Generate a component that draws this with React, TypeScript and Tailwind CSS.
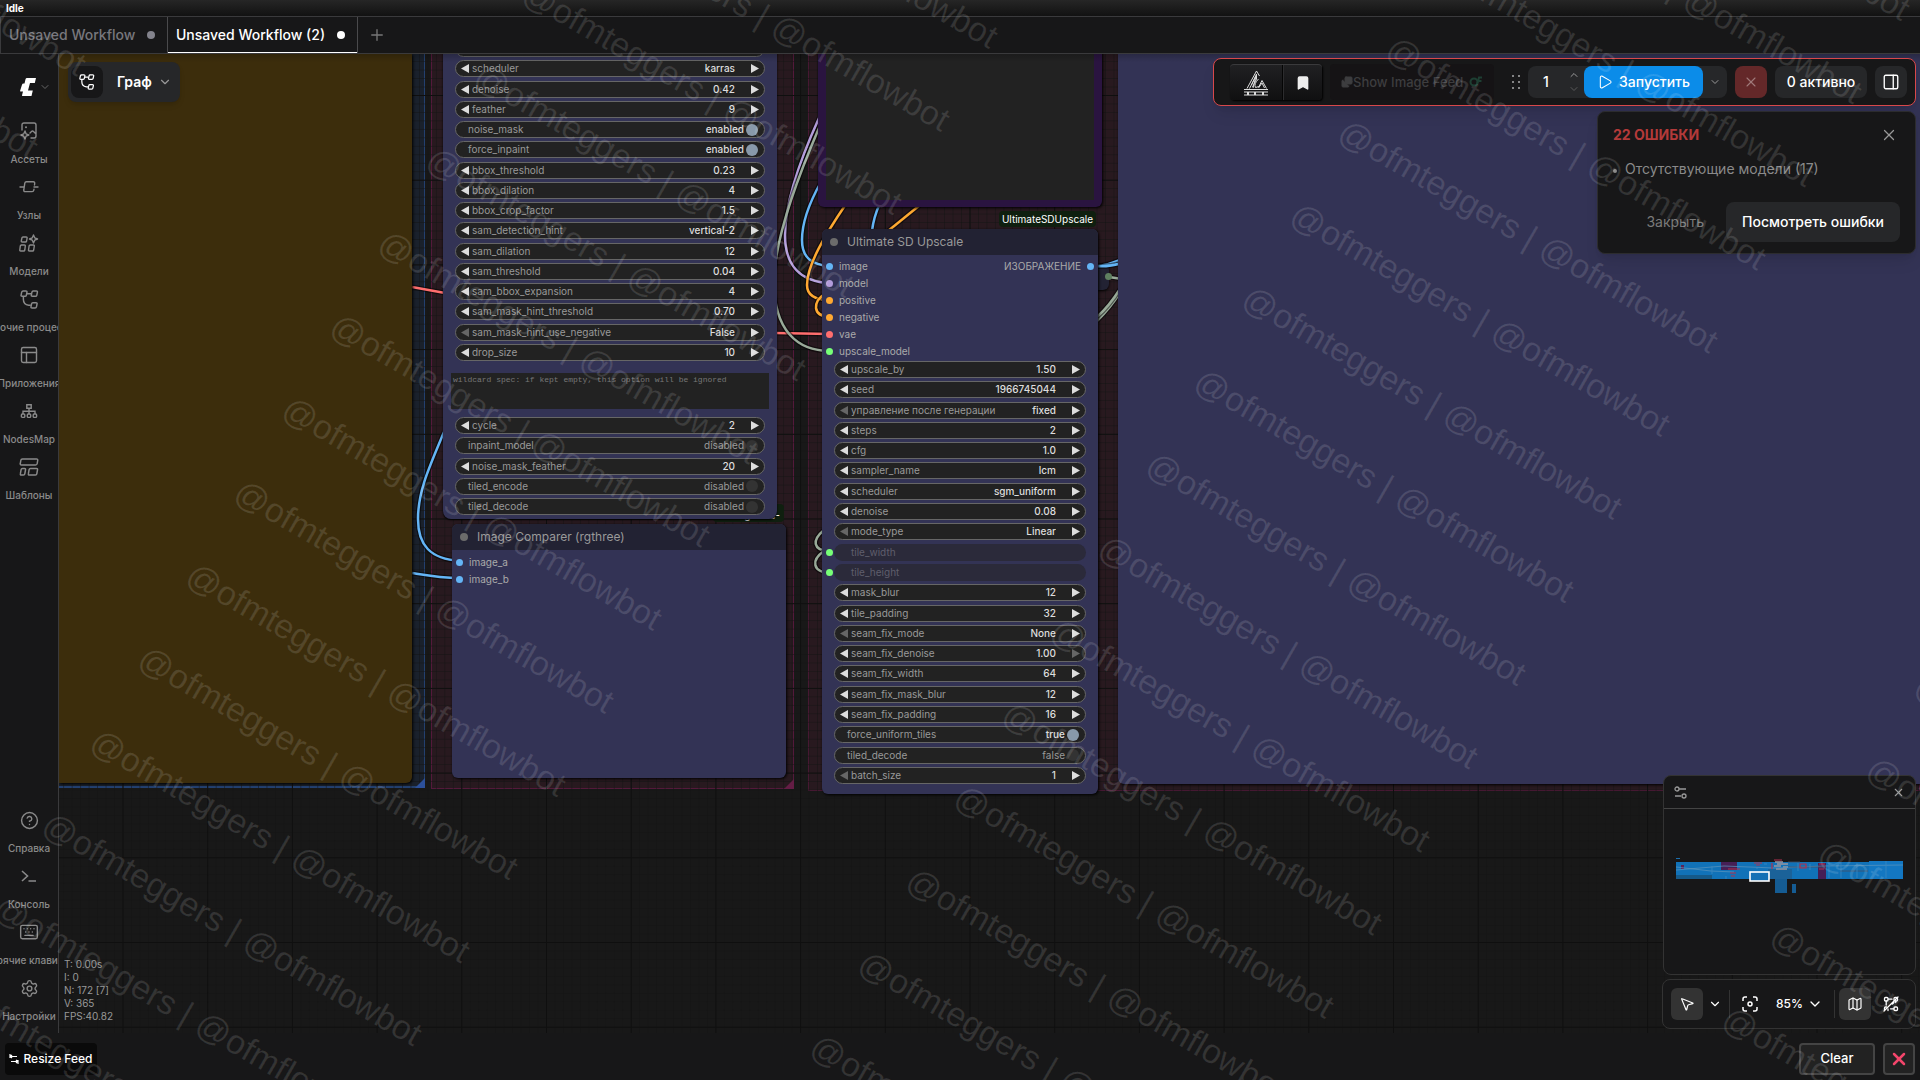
import React from "react";
import clsx from "clsx";
import {
  Bookmark,
  ChevronDown,
  ChevronUp,
  CircleHelp,
  Images,
  Keyboard,
  Map as MapIcon,
  MousePointer2,
  PanelRight,
  PanelsTopLeft,
  Play,
  Plus,
  Settings,
  X,
} from "lucide-react";

type Widget = {
  name: string;
  value?: string;
  kind?: "number" | "combo" | "toggle" | "linked";
  on?: boolean;
  minReached?: boolean;
  maxReached?: boolean;
};

const detailerWidgets: Widget[] = [
  { name: "sampler_name", value: "euler", kind: "combo" },
  { name: "scheduler", value: "karras", kind: "combo" },
  { name: "denoise", value: "0.42" },
  { name: "feather", value: "9" },
  { name: "noise_mask", value: "enabled", kind: "toggle", on: true },
  { name: "force_inpaint", value: "enabled", kind: "toggle", on: true },
  { name: "bbox_threshold", value: "0.23" },
  { name: "bbox_dilation", value: "4" },
  { name: "bbox_crop_factor", value: "1.5" },
  { name: "sam_detection_hint", value: "vertical-2", kind: "combo" },
  { name: "sam_dilation", value: "12" },
  { name: "sam_threshold", value: "0.04" },
  { name: "sam_bbox_expansion", value: "4" },
  { name: "sam_mask_hint_threshold", value: "0.70" },
  { name: "sam_mask_hint_use_negative", value: "False", kind: "combo", minReached: true },
  { name: "drop_size", value: "10" },
];

const detailerTail: Widget[] = [
  { name: "cycle", value: "2" },
  { name: "inpaint_model", value: "disabled", kind: "toggle" },
  { name: "noise_mask_feather", value: "20" },
  { name: "tiled_encode", value: "disabled", kind: "toggle" },
  { name: "tiled_decode", value: "disabled", kind: "toggle" },
];

const upscaleWidgets: Widget[] = [
  { name: "upscale_by", value: "1.50" },
  { name: "seed", value: "1966745044" },
  { name: "управление после генерации", value: "fixed", kind: "combo", minReached: true },
  { name: "steps", value: "2" },
  { name: "cfg", value: "1.0" },
  { name: "sampler_name", value: "lcm", kind: "combo" },
  { name: "scheduler", value: "sgm_uniform", kind: "combo" },
  { name: "denoise", value: "0.08" },
  { name: "mode_type", value: "Linear", kind: "combo", minReached: true },
  { name: "tile_width", kind: "linked" },
  { name: "tile_height", kind: "linked" },
  { name: "mask_blur", value: "12" },
  { name: "tile_padding", value: "32" },
  { name: "seam_fix_mode", value: "None", kind: "combo", minReached: true },
  { name: "seam_fix_denoise", value: "1.00", maxReached: true },
  { name: "seam_fix_width", value: "64" },
  { name: "seam_fix_mask_blur", value: "12" },
  { name: "seam_fix_padding", value: "16" },
  { name: "force_uniform_tiles", value: "true", kind: "toggle", on: true },
  { name: "tiled_decode", value: "false", kind: "toggle" },
  { name: "batch_size", value: "1", minReached: true },
];

const upscaleSlots = [
  { name: "image", color: "bg-[#64b5f6]" },
  { name: "model", color: "bg-[#b39ddb]" },
  { name: "positive", color: "bg-[#ffa931]" },
  { name: "negative", color: "bg-[#ffa931]" },
  { name: "vae", color: "bg-[#ff6e6e]" },
  { name: "upscale_model", color: "bg-[#77ff77]" },
];

function Arrow({ dir, dim }: { dir: "left" | "right"; dim?: boolean }) {
  return (
    <svg viewBox="0 0 8 9" className={clsx("w-2 h-[9px]", dim ? "fill-[#666]" : "fill-[#ddd]")}>
      {dir === "left" ? <path d="M8 0v9L0 4.5z" /> : <path d="M0 0v9l8-4.5z" />}
    </svg>
  );
}

function WidgetRow({ node, w }: { node: string; w: Widget }) {
  const id = `${node}-${w.name}`;

  if (w.kind === "linked") {
    return (
      <div className="relative h-[17px] flex items-center rounded-full bg-[#2b2a3a] pl-[17px] text-[#5f5e6c]">
        <span className="absolute -left-2 top-[5px] size-[7px] rounded-full bg-[#77ff77]" />
        {w.name}
      </div>
    );
  }

  if (w.kind === "toggle") {
    return (
      <div className="h-[17px] flex items-center rounded-full border border-[#666] bg-[#222] pl-3 pr-1.5">
        <label htmlFor={id} className="flex-1 text-[#999]">
          {w.name}
        </label>
        <span className={w.on ? "text-[#ddd] font-medium" : "text-[#999]"}>{w.value}</span>
        <input
          id={id}
          type="checkbox"
          defaultChecked={w.on}
          className="appearance-none ml-0.5 size-3 rounded-full bg-[#333] checked:bg-[#8899aa]"
        />
      </div>
    );
  }

  return (
    <div className="h-[17px] flex items-center rounded-full border border-[#666] bg-[#222] px-[5px]">
      <button aria-label="previous">
        <Arrow dir="left" dim={w.minReached} />
      </button>
      <label htmlFor={id} className="ml-[3px] text-[#999] whitespace-nowrap">
        {w.name}
      </label>
      {w.kind === "combo" ? (
        <select
          id={id}
          className="appearance-none flex-1 min-w-0 mr-4 bg-transparent text-[#ddd] font-medium text-right [text-align-last:right]"
        >
          <option>{w.value}</option>
        </select>
      ) : (
        <input
          id={id}
          defaultValue={w.value}
          className="flex-1 min-w-0 mr-4 bg-transparent text-[#ddd] font-medium text-right"
        />
      )}
      <button aria-label="next">
        <Arrow dir="right" dim={w.maxReached} />
      </button>
    </div>
  );
}

function NodeHeader({ title }: { title: string }) {
  return (
    <div className="h-[26px] flex items-center gap-[9px] pl-2 bg-[#222233] rounded-t-md">
      <span className="size-2 rounded-full bg-[#6b6b6b]" />
      <span className="text-xs text-[#999]">{title}</span>
    </div>
  );
}

function Slot({ name, color }: { name: string; color: string }) {
  return (
    <div className="h-[17px] flex items-center gap-1.5 pl-1">
      <span className={clsx("size-[7px] rounded-full", color)} />
      <span className="text-[#aaa]">{name}</span>
    </div>
  );
}

function Grid() {
  return (
    <svg className="absolute inset-0 w-full h-full">
      <defs>
        <pattern id="minor" width="8.47" height="8.47" x="63.5" y="41" patternUnits="userSpaceOnUse">
          <path d="M0 0H8.47M0 0V8.47" stroke="#131313" strokeWidth="1" fill="none" />
        </pattern>
        <pattern id="major" width="84.7" height="84.7" x="63.5" y="41" patternUnits="userSpaceOnUse">
          <path d="M0 0H85M0 0V85" stroke="#0f0f0f" strokeWidth="2" fill="none" />
        </pattern>
      </defs>
      <rect width="100%" height="100%" fill="url(#minor)" />
      <rect width="100%" height="100%" fill="url(#major)" />
    </svg>
  );
}

const wires = [
  { d: "M412 287L445 293", c: "#ff6e6e" },
  { d: "M775 333L830 334", c: "#ff6e6e" },
  { d: "M444 432C428 470 418 492 418 519C418 545 430 559 460 561", c: "#64b5f6" },
  { d: "M412 573C430 576 440 578 460 578", c: "#64b5f6" },
  { d: "M819 118C800 160 785 205 785 235C785 265 800 282 830 283", c: "#b39ddb" },
  { d: "M819 128C800 172 774 240 774 282C774 330 797 351 830 351", c: "#99aa99" },
  { d: "M821 182C808 205 802 225 802 240C802 258 812 265 830 266", c: "#64b5f6" },
  { d: "M846 204C825 235 807 265 807 285C807 297 817 300 830 300", c: "#ffa931" },
  { d: "M920 205L888 231", c: "#ffa931" },
  { d: "M826 293C812 302 812 316 830 317", c: "#ffa931" },
  { d: "M880 203C876 212 873 222 872 231", c: "#64b5f6" },
  { d: "M1095 266C1105 266 1112 263 1122 259", c: "#64b5f6" },
  { d: "M1095 266C1105 267 1112 266 1122 263", c: "#64b5f6" },
  { d: "M1109 277L1122 279", c: "#99aa99" },
  { d: "M1097 321C1106 312 1114 302 1119 294", c: "#99aa99" },
  { d: "M1097 317C1106 309 1113 300 1120 289", c: "#99aa99" },
  { d: "M824 530C812 540 812 550 830 552", c: "#99aa99" },
  { d: "M824 551C811 560 812 572 830 573", c: "#99aa99" },
];

function Wires() {
  return (
    <svg className="absolute inset-0 w-full h-full" fill="none">
      <g transform="translate(-59 -54)">
        {wires.map((w) => (
          <g key={w.d}>
            <path d={w.d} stroke="#000" strokeOpacity="0.5" strokeWidth="5" />
            <path d={w.d} stroke={w.c} strokeWidth="2.5" />
          </g>
        ))}
      </g>
    </svg>
  );
}

function WorkflowIcon({ className }: { className?: string }) {
  return (
    <svg viewBox="0 0 18 18" className={className} fill="none" stroke="currentColor" strokeWidth="1.4" strokeLinejoin="round">
      <path d="M3 1h2.600q1.200 0 1 1l-.6 3q-.2 1-1.200 1H2q-1.200 0-1-1l.6-3q.3-1 1.400-1zM12.500 1h3q1.200 0 1 1l-.6 3q-.2 1-1.300 1h-2.900q-1.200 0-1-1l.6-3q.2-1 1.200-1zM12.200 12h3q1.200 0 1 1l-.6 3q-.2 1-1.300 1h-2.900q-1.200 0-1-1l.6-3q.2-1 1.200-1z" />
      <path d="M6.500 3.500h4M3.200 6.200v2.600q0 5.200 5 5.600h2" />
    </svg>
  );
}

function NodeIcon() {
  return (
    <svg viewBox="0 0 20 14" className="w-5 h-3.5" fill="none" stroke="currentColor" strokeWidth="1.4" strokeLinecap="round">
      <path d="M1 7h4M15 7h4M15.500 5l.2-1.600q.2-1.600-1.400-1.600H7.400q-1.300 0-1.600 1.400l-1 6.800q-.3 1.600 1.400 1.600h7q1.300 0 1.600-1.400l.2-1" />
    </svg>
  );
}

function ModelsIcon() {
  return (
    <svg viewBox="0 0 20 18" className="w-5 h-[18px]" fill="none" stroke="currentColor" strokeWidth="1.4" strokeLinejoin="round">
      <path d="M4 3h3.200q1 0 .9 1l-.5 3q-.2 1-1.100 1H3.200q-1 0-.9-1l.6-3Q3.100 3 4 3zM2.400 11h3q1 0 .9 1l-.5 4q-.2 1-1.100 1h-3q-1 0-.9-1l.5-4q.2-1 1.100-1zM11.200 11h3.200q1 0 .9 1l-.6 4q-.2 1-1.100 1h-3.200q-1 0-.9-1l.6-4q.2-1 1.100-1zM14.500 1l1.200 2.800L18.500 5l-2.800 1.200L14.500 9l-1.200-2.800L10.500 5l2.800-1.200z" />
    </svg>
  );
}

function AssetsIcon() {
  return (
    <svg viewBox="0 0 18 18" className="size-[18px]" fill="none" stroke="currentColor" strokeWidth="1.4" strokeLinejoin="round" strokeLinecap="round">
      <path d="M2 8V3q0-2 2-2h10q2 0 2 2v11q0 2-2 2h-3M16 12l-2.500-2.500q-1-1-2 0L10 11" />
      <path d="M5 9l1 2.800L8.800 13 6 14.200 5 17l-1.200-2.800L1 13l2.800-1.200z" />
      <circle cx="6" cy="5.200" r="1" fill="currentColor" stroke="none" />
    </svg>
  );
}

function SitemapIcon() {
  return (
    <svg viewBox="0 0 18 16" className="w-[18px] h-4" fill="none" stroke="currentColor" strokeWidth="1.400">
      <path d="M6.800 1.700h4.400v3.600H6.800zM9 5.300v6M3 11V8.200h12V11" />
      <rect x="1.400" y="11" width="3.400" height="3.400" rx="1" />
      <rect x="7.300" y="11" width="3.400" height="3.400" rx="1" />
      <rect x="13.200" y="11" width="3.400" height="3.400" rx="1" />
    </svg>
  );
}

function TemplatesIcon() {
  return (
    <svg viewBox="0 0 20 18" className="w-5 h-[18px]" fill="none" stroke="currentColor" strokeWidth="1.500" strokeLinejoin="round">
      <path d="M3.500 1h14q1.500 0 1.200 1.500l-.5 3q-.2 1.500-1.700 1.500h-14Q1 7 1.300 5.500l.5-3Q2 1 3.500 1zM3.500 10.500h2q1.300 0 1 1.300l-.7 4q-.2 1.200-1.400 1.200h-2q-1.300 0-1-1.300l.7-4q.2-1.200 1.400-1.200zM11.500 10.500h6q1.300 0 1 1.300l-.7 4q-.2 1.200-1.400 1.200h-6q-1.300 0-1-1.300l.7-4q.2-1.200 1.400-1.200z" />
    </svg>
  );
}

function ConsoleIcon() {
  return (
    <svg viewBox="0 0 18 14" className="w-[18px] h-3.5" fill="none" stroke="currentColor" strokeWidth="1.600">
      <path d="M2 2l5.500 5L2 12M8.500 12H16" />
    </svg>
  );
}

function SidebarItem({ icon, label }: { icon: React.ReactNode; label: string }) {
  return (
    <button className="w-full h-14 flex flex-col items-center text-[#8a8a8a]">
      <span className="h-9 flex items-center">{icon}</span>
      <span className="w-full px-px overflow-hidden flex justify-center">
        <span className="text-[10px] leading-5 font-medium whitespace-nowrap">{label}</span>
      </span>
    </button>
  );
}

function Sidebar() {
  return (
    <nav className="w-[59px] shrink-0 flex flex-col justify-between bg-[#171718] border-r border-[#3a3a3c] pt-[15px] pb-[7px]">
      <div>
        <button aria-label="Menu" className="h-9 w-full flex items-center gap-[3px] pl-5 mb-2">
          <svg viewBox="0 0 16 18" className="w-4 h-[18px] shrink-0 fill-white">
            <path d="M7 0h9l-1.200 5H10L8 12.500h4.800L11.500 18H2.800q-1 0-.7-1l.9-3.500H1q-1.200 0-.8-1.100L2 6.700q.3-1.200 1.500-1.200h1L5.500 1.200Q5.800 0 7 0z" />
          </svg>
          <ChevronDown className="size-3 shrink-0 text-[#666]" />
        </button>
        <SidebarItem icon={<AssetsIcon />} label="Ассеты" />
        <SidebarItem icon={<NodeIcon />} label="Узлы" />
        <SidebarItem icon={<ModelsIcon />} label="Модели" />
        <SidebarItem icon={<WorkflowIcon className="size-[19px]" />} label="Рабочие процессы" />
        <SidebarItem icon={<PanelsTopLeft className="size-5" strokeWidth={1.7} />} label="Приложения" />
        <SidebarItem icon={<SitemapIcon />} label="NodesMap" />
        <SidebarItem icon={<TemplatesIcon />} label="Шаблоны" />
      </div>
      <div>
        <SidebarItem icon={<CircleHelp className="size-[19px]" strokeWidth={1.8} />} label="Справка" />
        <SidebarItem icon={<ConsoleIcon />} label="Консоль" />
        <SidebarItem icon={<Keyboard className="size-5" strokeWidth={1.7} />} label="Горячие клавиши" />
        <SidebarItem icon={<Settings className="size-[19px]" strokeWidth={1.8} />} label="Настройки" />
      </div>
    </nav>
  );
}

function Tabs() {
  return (
    <div className="h-[38px] shrink-0 flex border-y border-[#3a3a3c] bg-[#171718] text-sm font-medium">
      <button className="w-[167px] flex items-center justify-between pl-2 pr-3 border-l border-[#3a3a3c] text-[#77777d]">
        Unsaved Workflow
        <span className="size-2 rounded-full bg-[#83838c]" />
      </button>
      <button className="w-[191px] flex items-center justify-between pl-2 pr-3 border-x border-[#4a4a4c] text-white shadow-[inset_0_-1px_0_#fff]">
        Unsaved Workflow (2)
        <span className="size-2 rounded-full bg-white" />
      </button>
      <button aria-label="New workflow" className="px-2.5 text-[#777]">
        <Plus className="size-[18px]" strokeWidth={1.8} />
      </button>
    </div>
  );
}

function ManagerLogo() {
  return (
    <svg viewBox="0 0 26 26" className="size-[26px]" fill="none" stroke="#ddd" strokeWidth="1">
      <path d="M4 18.500L13.500 1l3 5M6.500 18.500L13 6l-3 12M8.500 15l5-11v5l-4 8M15.500 9q-5 5-3 8.500l3.500-1 3-6 4.500 8M15.500 18l3.500-5 2.500 5" />
      <path d="M1 19.500h24M1 22h24M1 25h24" strokeWidth="1.200" />
      <path d="M5 22v3M12 22v3M20 22v3" strokeWidth="2" />
    </svg>
  );
}

function ActionBar() {
  return (
    <div className="h-12 flex items-center rounded-lg border border-[#d8484b] bg-[#171718] pl-4 pr-2 shadow-lg text-sm text-white">
      <div className="flex h-9 rounded border-t border-[#3a3a3c] bg-linear-to-b from-[#202022] to-[#101011] shadow-[1px_1px_2px_#000]">
        <button aria-label="Manager" className="w-[53px] flex items-center justify-center border-r border-[#050505]">
          <ManagerLogo />
        </button>
        <button aria-label="Bookmarks" className="w-[39px] flex items-center justify-center border-l border-[#2c2c2e]">
          <Bookmark className="size-4 fill-[#eee] text-[#eee]" />
        </button>
      </div>
      <button className="ml-2 w-[164px] h-9 flex items-center pl-[11px] rounded bg-[#151315] text-[13px] text-[#3d3d3f] whitespace-nowrap">
        <Images className="size-3 shrink-0 fill-[#3d3d3f]" />
        <span className="font-medium">Show Image Feed</span>
        <svg viewBox="0 0 14 12" className="ml-1.5 w-3.5 h-3" fill="none" stroke="#1e3f33" strokeWidth="2">
          <circle cx="5" cy="6" r="3.500" />
          <path d="M8 8.500l2-7h3M10 5h2.500" />
        </svg>
      </button>
      <svg viewBox="0 0 10 14" className="ml-[17px] w-2.5 h-3.5 fill-[#aaa]">
        {[1, 7, 13].map((y) => (
          <React.Fragment key={y}>
            <circle cx="2" cy={y} r="1" />
            <circle cx="8" cy={y} r="1" />
          </React.Fragment>
        ))}
      </svg>
      <div className="ml-[7px] flex h-8 rounded-lg bg-[#262729]">
        <input
          aria-label="Batch count"
          defaultValue="1"
          className="w-9 bg-transparent text-center font-medium"
        />
        <div className="w-5 flex flex-col justify-between items-center py-[3px] text-[#999]">
          <button aria-label="Increase">
            <ChevronUp className="size-3" />
          </button>
          <button aria-label="Decrease">
            <ChevronDown className="size-3 text-[#5a5a5a]" />
          </button>
        </div>
        <button className="w-[119px] flex items-center justify-center gap-1.5 rounded-lg bg-[#0b8ce9] font-medium">
          <Play className="size-4" strokeWidth={1.6} />
          Запустить
        </button>
        <button aria-label="Queue options" className="w-6 flex items-center justify-center text-[#999]">
          <ChevronDown className="size-3" />
        </button>
      </div>
      <button aria-label="Cancel" className="ml-2 size-8 flex items-center justify-center rounded-lg bg-[#642829] text-[#a07a7a]">
        <X className="size-4" strokeWidth={1.6} />
      </button>
      <button className="ml-2 w-[92px] h-8 rounded-lg bg-[#262729] font-medium">0 активно</button>
      <button aria-label="Toggle panel" className="ml-2 size-8 flex items-center justify-center rounded-lg bg-[#262729]">
        <PanelRight className="size-[18px]" strokeWidth={1.8} />
      </button>
    </div>
  );
}

function ErrorPopover() {
  return (
    <div className="w-[319px] rounded-lg border border-[#2c2c2e] bg-[#171718] p-[15px] pt-[11px] pb-[11px] shadow-lg text-sm">
      <div className="flex items-center justify-between pr-0.5">
        <h2 className="font-bold leading-6 text-[#b33a3a]">22 ОШИБКИ</h2>
        <button aria-label="Close" className="text-[#999]">
          <X className="size-[18px]" strokeWidth={1.6} />
        </button>
      </div>
      <ul className="mt-2.5 h-9 text-[#8a8a8a]">
        <li className="flex items-center gap-2 leading-6">
          <span className="mt-1 size-1 rounded-full bg-[#8a8a8a]" />
          Отсутствующие модели (17)
        </li>
      </ul>
      <div className="mt-[9px] flex items-center justify-end gap-[22px]">
        <button className="text-[#7a7a7a]">Закрыть</button>
        <button className="h-10 w-[174px] rounded-lg bg-[#262729] font-medium text-white">Посмотреть ошибки</button>
      </div>
    </div>
  );
}

function MiniMap() {
  return (
    <div className="w-[253px] rounded-lg border border-[#333] bg-[#171718]">
      <div className="h-[33px] flex items-center justify-between px-2.5 border-b border-[#444] text-[#999]">
        <button aria-label="Minimap settings">
          <svg viewBox="0 0 13 13" className="size-[13px]" fill="none" stroke="currentColor" strokeWidth="1.300">
            <path d="M5 3h7M1 10h6" />
            <circle cx="3" cy="3" r="2" />
            <circle cx="10" cy="10" r="2" />
          </svg>
        </button>
        <button aria-label="Close minimap">
          <X className="size-[13px]" />
        </button>
      </div>
      <svg viewBox="0 0 251 165" className="w-full h-[165px]">
        <rect x="12" y="49" width="4" height="1" fill="#1a6fae" />
        <rect x="12" y="53" width="227" height="17" fill="#1172b8" />
        <rect x="205" y="52" width="34" height="18" fill="#1377c2" />
        <rect x="12" y="66" width="36" height="4" fill="#155a8a" />
        <rect x="111" y="70" width="12" height="14" fill="#155c93" />
        <rect x="128" y="75" width="4" height="9" fill="#155c93" />
        <rect x="104" y="60" width="24" height="10" fill="#1b6299" />
        <rect x="57" y="53" width="16" height="8" fill="#461f55" />
        <rect x="17" y="56" width="3" height="4" fill="#5a2458" />
        <rect x="154" y="54" width="8" height="16" fill="#461f55" />
        <path d="M111 53h8M113 55h11M110 57h7M119 58h5M112 60h11" stroke="#9a97a0" strokeWidth="1.300" fill="none" />
        <path d="M12 61L60 57L110 59L160 57L239 56M12 58L47 62L70 63" stroke="#5b95bd" strokeWidth="0.700" fill="none" />
        <path d="M124 58h37M176 62h28M124 53h12" stroke="#444f66" strokeWidth="0.800" fill="none" />
        <path d="M64 60h12M66 64h6M67 67h4M90 54h8M92 56h4M108 54v6M110 51h8M136 55h6v4h-6zM155 55h6M155 60h5" stroke="#b2304f" strokeWidth="1.200" fill="none" />
        <path d="M92 59h2M100 55h3M48 57v8M62 67v3M134 54v8M146 55v6M165 54v15M177 54v15M193 54v15M222 52v17" stroke="#3a89c2" strokeWidth="0.800" />
        <rect x="86" y="63" width="19" height="9" fill="#1470b5" stroke="#fff" strokeWidth="1.600" />
      </svg>
    </div>
  );
}

function ViewControls() {
  return (
    <div className="w-[254px] h-[50px] flex items-center rounded-lg border border-[#333] bg-[#171718] pl-2 text-white">
      <button aria-label="Select" className="size-8 flex items-center justify-center rounded-md bg-[#333]">
        <MousePointer2 className="size-4" strokeWidth={1.8} />
      </button>
      <button aria-label="Select mode" className="ml-1 size-4 flex items-center justify-center">
        <ChevronDown className="size-3.5" />
      </button>
      <span className="ml-1.5 w-px h-7 bg-[#333]" />
      <button aria-label="Fit view" className="ml-3 size-4">
        <svg viewBox="0 0 16 16" className="size-4" fill="none" stroke="currentColor" strokeWidth="1.500">
          <path d="M1 5V3q0-2 2-2h2M11 1h2q2 0 2 2v2M15 11v2q0 2-2 2h-2M5 15H3q-2 0-2-2v-2" />
          <circle cx="8" cy="8" r="2" />
        </svg>
      </button>
      <button className="ml-[18px] flex items-center gap-1 text-xs font-medium">
        85%
        <ChevronDown className="size-4" />
      </button>
      <span className="ml-[11px] w-px h-7 bg-[#333]" />
      <button aria-label="Toggle minimap" className="ml-1 size-8 flex items-center justify-center rounded-md bg-[#333]">
        <MapIcon className="size-4" strokeWidth={1.8} />
      </button>
      <button aria-label="Hide links" className="ml-1 size-8 flex items-center justify-center">
        <svg viewBox="0 0 16 16" className="size-4" fill="none" stroke="currentColor" strokeWidth="1.300" strokeLinecap="round">
          <rect x="1.500" y="1.500" width="3.500" height="3.500" rx="1" />
          <rect x="11" y="1.500" width="3.500" height="3.500" rx="1" />
          <path d="M5 3.200h4M3.200 5v4M1 15L15 1M11 6.500l-1.500 1.500M12.700 5.200v1.300" />
          <path d="M3.500 11h-1q-1 0-1 1v1.500M5 14.500q0 0 0-1.500M7.500 12.800H11" />
          <rect x="11" y="11" width="3.500" height="3.500" rx="1" />
        </svg>
      </button>
    </div>
  );
}

function Canvas() {
  return (
    <main className="relative flex-1 min-w-0 overflow-hidden bg-[#181818] text-[10px] leading-[15px]">
      {/* groups */}
      <div className="absolute left-0 top-0 w-[366px] h-[734px] bg-[#2554a4]/15 border-r border-b-2 border-[#23406f]" />
      <div className="absolute left-[372px] top-0 w-[363px] h-[735px] bg-[#891f4d]/15 border border-t-0 border-[#54193b]" />
      <div className="absolute left-[749px] top-0 right-0 h-[737px] bg-[#891f4d]/15 border border-t-0 border-[#54193b]" />
      <Grid />
      <svg viewBox="0 0 10 10" className="absolute left-[356px] top-[724px] size-2.5 fill-[#2c509a]">
        <path d="M10 0v10H0z" />
      </svg>
      <svg viewBox="0 0 10 10" className="absolute left-[725px] top-[725px] size-2.5 fill-[#641d45]">
        <path d="M10 0v10H0z" />
      </svg>

      <div className="absolute left-[1035px] top-[210px] w-[15px] h-[26px] rounded-r-md bg-[#222233] shadow-[0_1px_3px_#000]" />
      <Wires />
      <span className="absolute left-[1046px] top-[219px] size-[7px] rounded-full bg-[#5f8060]" />

      <div className="absolute left-0 top-0 w-[353px] h-[729px] rounded-br-md bg-[#3c2d0c] shadow-[1px_1px_3px_#000]" />

      {/* image comparer */}
      <span className="absolute left-[654px] top-[450px] w-[71px] h-[18px] pr-1 rounded bg-[#0f1f0f] text-white font-medium leading-[23px] text-right">
        rgthree-comfy
      </span>
      <section className="absolute left-[393px] top-[470px] w-[334px] h-[254px] rounded-md bg-[#333355] shadow-[1px_1px_3px_#000]">
        <NodeHeader title="Image Comparer (rgthree)" />
        <div className="pt-1">
          <Slot name="image_a" color="bg-[#64b5f6]" />
          <Slot name="image_b" color="bg-[#64b5f6]" />
        </div>
      </section>

      {/* face detailer */}
      <section className="absolute left-[384px] -top-3.5 w-[334px] pb-1 rounded-b-lg bg-[#333355] shadow-[0_1px_2px_#000]">
        <div className="h-[321px] px-3 flex flex-col justify-between">
          {detailerWidgets.map((w) => (
            <WidgetRow key={w.name} node="detailer" w={w} />
          ))}
        </div>
        <textarea
          aria-label="wildcard"
          placeholder="wildcard spec: if kept empty, this option will be ignored"
          className="block mx-2 mt-3 w-[318px] h-9 px-0.5 py-px resize-none bg-[#222] text-[8px] leading-[11px] font-['Liberation_Mono',monospace] placeholder:text-[#777]"
        />
        <div className="mt-2 h-[98px] px-3 flex flex-col justify-between">
          {detailerTail.map((w) => (
            <WidgetRow key={w.name} node="detailer" w={w} />
          ))}
        </div>
      </section>

      {/* note */}
      <section className="absolute left-[759px] -top-1 w-[284px] h-[157px] px-2 pb-[7px] rounded-b-md bg-[#2a1440] shadow-[1px_1px_3px_#000]">
        <textarea aria-label="note" className="block w-full h-full resize-none bg-[#222]" />
      </section>

      {/* ultimate sd upscale */}
      <span className="absolute left-[940px] top-[157px] w-[97px] h-4 rounded bg-[#0f1f0f] text-white leading-[17px] text-center">
        UltimateSDUpscale
      </span>
      <section className="absolute left-[763px] top-[175px] w-[276px] pb-2.5 rounded-md bg-[#333355] shadow-[1px_1px_3px_#000]">
        <NodeHeader title="Ultimate SD Upscale" />
        <div className="flex justify-between pt-[3px] pb-px">
          <div>
            {upscaleSlots.map((s) => (
              <Slot key={s.name} {...s} />
            ))}
          </div>
          <div className="h-[17px] flex items-center gap-1.5 pr-1 text-[#aaa]">
            ИЗОБРАЖЕНИЕ
            <span className="size-[7px] rounded-full bg-[#64b5f6]" />
          </div>
        </div>
        <div className="h-[423px] px-3 flex flex-col justify-between">
          {upscaleWidgets.map((w) => (
            <WidgetRow key={w.name} node="upscale" w={w} />
          ))}
        </div>
      </section>

      <div className="absolute left-[1059px] -right-2 top-0 h-[730px] rounded-bl-md bg-[#333355] shadow-[1px_1px_3px_#000]" />

      {/* floating panels */}
      <div className="absolute inset-x-0 top-0 h-2 bg-linear-to-b from-black/20 to-transparent" />
      <div className="absolute left-[9px] top-2 h-10 w-28 flex items-center rounded-lg bg-[#262729] pl-[3px] text-white shadow-md">
        <button aria-label="Workflow mode" className="size-8 flex items-center justify-center rounded-lg bg-[#171718]">
          <WorkflowIcon className="size-4" />
        </button>
        <button className="ml-3.5 flex items-center gap-1.5 text-sm font-semibold">
          Граф
          <ChevronDown className="size-3.5 text-[#999]" />
        </button>
      </div>
      <div className="absolute right-1 top-1 flex flex-col items-end gap-[5px]">
        <ActionBar />
        <ErrorPopover />
      </div>
      <div className="absolute right-1 bottom-1 flex flex-col items-end gap-1">
        <MiniMap />
        <ViewControls />
      </div>
      <div className="absolute left-[5px] bottom-2.5 text-[10px] leading-[13px] text-[#999]">
        <p>T: 0.00s</p>
        <p>I: 0</p>
        <p>N: 172 [7]</p>
        <p>V: 365</p>
        <p>FPS:40.82</p>
      </div>
    </main>
  );
}

function Watermark() {
  return (
    <div aria-hidden="true" className="pointer-events-none absolute inset-0 overflow-hidden">
      <div className="flow-root origin-top-left rotate-30">
        <div className="-ml-[326px] -mt-[1088px] w-[3104px] text-[34px] text-white/12 font-['Liberation_Sans',Arial,sans-serif]">
          {Array.from({ length: 22 }, (_, row) => (
            <div key={row} className="h-24 flex items-center">
              {Array.from({ length: 4 }, (_, col) => (
                <span key={col} className="w-[776px] shrink-0">
                  @ofmteggers | @ofmflowbot
                </span>
              ))}
            </div>
          ))}
        </div>
      </div>
    </div>
  );
}

export default function App() {
  return (
    <div className="relative h-screen flex flex-col overflow-hidden bg-[#171718] font-['Inter',sans-serif]">
      <header className="h-4 shrink-0 flex items-center pl-1.5 pt-px bg-linear-to-b from-[#262626] to-[#121212] text-[10px] font-bold text-white">
        Idle
      </header>
      <Tabs />
      <div className="flex-1 min-h-0 flex">
        <Sidebar />
        <Canvas />
      </div>
      <footer className="h-[47px] shrink-0 flex items-center justify-between px-[5px] pt-1 text-white">
        <button className="h-8 w-[92px] flex items-center justify-center gap-1 rounded bg-[#0a0a0a] text-xs font-medium">
          <svg viewBox="0 0 10 10" className="size-2.5" fill="none" stroke="#fff" strokeWidth="1.200">
            <path d="M1 0v4M1 2.500h7M3 1L1.500 2.500 3 4M9 6v4M9 7.500H2M7 6l1.500 1.500L7 9" />
          </svg>
          Resize Feed
        </button>
        <div className="flex gap-2">
          <button className="h-8 w-[76px] rounded border-2 border-[#444] bg-[#222] text-[13px] font-medium">Clear</button>
          <button aria-label="Close feed" className="size-8 flex items-center justify-center rounded border-2 border-[#444] bg-[#222]">
            <X className="size-5 text-[#f2466b]" strokeWidth={3} />
          </button>
        </div>
      </footer>
      <Watermark />
    </div>
  );
}
